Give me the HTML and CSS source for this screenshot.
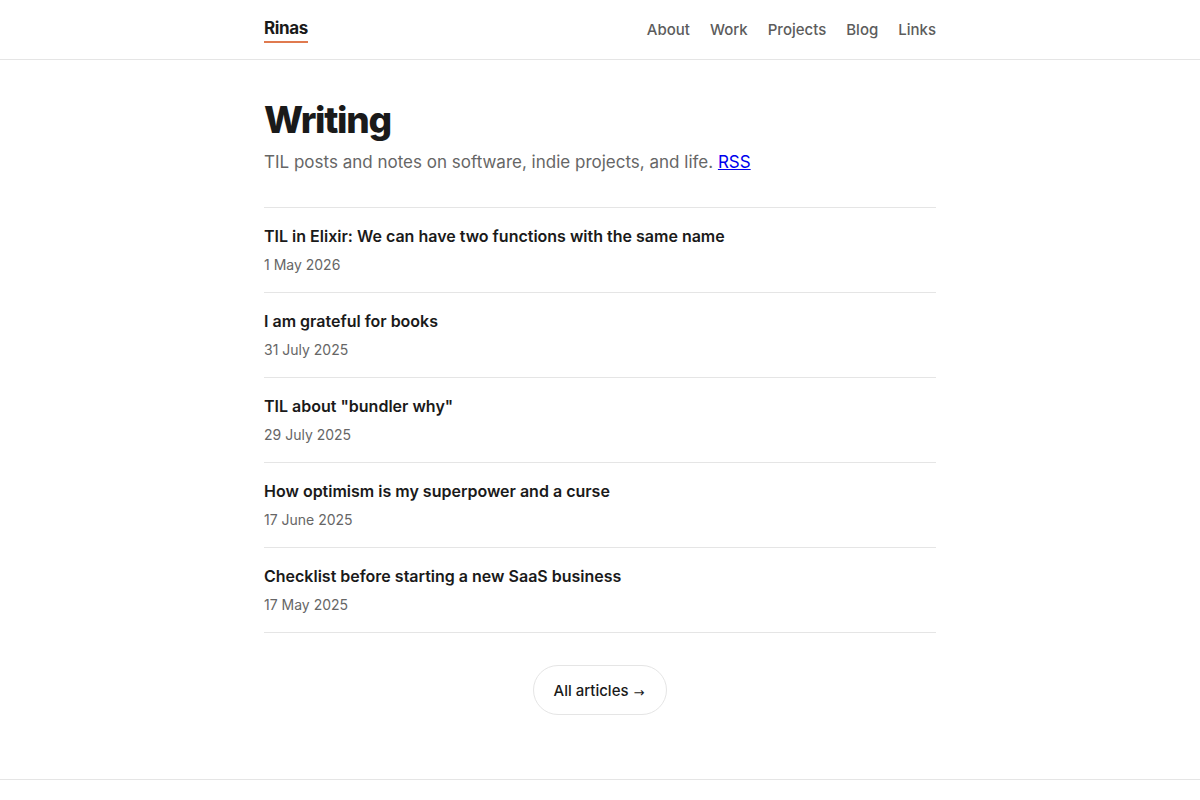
FILE: index.html
```html
<!DOCTYPE html>
<html lang="en">
<head>
<meta charset="utf-8">
<title>Writing — Rinas</title>
<link rel="stylesheet" href="styles.css">
</head>
<body>
<header class="site-header">
  <div class="container header-inner">
    <a class="logo" href="#">Rinas</a>
    <nav class="nav">
      <a href="#">About</a>
      <a href="#">Work</a>
      <a href="#">Projects</a>
      <a href="#">Blog</a>
      <a href="#">Links</a>
    </nav>
  </div>
</header>
<main class="container main">
  <h1 class="page-title">Writing</h1>
  <p class="lede">TIL posts and notes on software, indie projects, and life. <a class="rss" href="#">RSS</a></p>
  <ul class="posts">
    <li class="post"><a class="post-title" href="#">TIL in Elixir: We can have two functions with the same name</a><div class="post-date">1 May 2026</div></li>
    <li class="post"><a class="post-title" href="#">I am grateful for books</a><div class="post-date">31 July 2025</div></li>
    <li class="post"><a class="post-title" href="#">TIL about "bundler why"</a><div class="post-date">29 July 2025</div></li>
    <li class="post"><a class="post-title" href="#">How optimism is my superpower and a curse</a><div class="post-date">17 June 2025</div></li>
    <li class="post"><a class="post-title" href="#">Checklist before starting a new SaaS business</a><div class="post-date">17 May 2025</div></li>
  </ul>
  <div class="more">
    <a class="more-btn" href="#">All articles <span class="arrow">→</span></a>
  </div>
</main>
<footer class="site-footer"></footer>
</body>
</html>
```

FILE: styles.css
```css
* { box-sizing: border-box; }
html, body { margin: 0; padding: 0; }
body {
  font-family: Inter, "Noto Sans", sans-serif;
  color: #1a1a1a;
  background: #fff;
}
a { color: inherit; text-decoration: none; }
.container { width: 672px; margin: 0 auto; }
.site-header { border-bottom: 1px solid #e5e5e5; }
.header-inner {
  height: 59px;
  display: flex;
  align-items: center;
  justify-content: space-between;
}
.logo {
  font-size: 17px;
  font-weight: 700;
  letter-spacing: -0.02em;
  color: #1a1a1a;
  padding-bottom: 2px;
  border-bottom: 2px solid #e07a4f;
  line-height: 22px;
  margin-top: 1px;
}
.nav { display: flex; gap: 20px; }
.nav a { font-size: 15px; font-weight: 500; color: #5c5c5c; }
.main { padding-top: 38px; padding-bottom: 64px; }
.page-title {
  margin: 0;
  font-size: 37px;
  font-weight: 800;
  letter-spacing: -0.035em;
  line-height: 44px;
}
.lede {
  margin: 7px 0 0;
  font-size: 17px;
  line-height: 26px;
  color: #666;
}
.rss { color: #0000ee; text-decoration: underline; }
.posts {
  list-style: none;
  margin: 32px 0 0;
  padding: 0;
  border-top: 1px solid #e5e5e5;
}
.post {
  border-bottom: 1px solid #e5e5e5;
  padding: 17px 0 17px;
}
.post-title {
  display: block;
  font-size: 16px;
  font-weight: 600;
  line-height: 22px;
  color: #1a1a1a;
}
.post-date {
  margin-top: 8px;
  font-size: 14px;
  line-height: 20px;
  color: #666;
}
.more { display: flex; justify-content: center; margin-top: 32px; }
.more-btn {
  display: inline-flex;
  align-items: center;
  height: 50px;
  padding: 0 22px 0 20px;
  border: 1px solid #e5e5e5;
  border-radius: 999px;
  font-size: 15px;
  font-weight: 500;
  color: #1a1a1a;
}
.arrow {
  margin-left: 5px;
  font-family: "DejaVu Sans", sans-serif;
  font-size: 13px;
  position: relative;
  top: 2px;
}
.site-footer { border-top: 1px solid #e5e5e5; height: 40px; }
```
